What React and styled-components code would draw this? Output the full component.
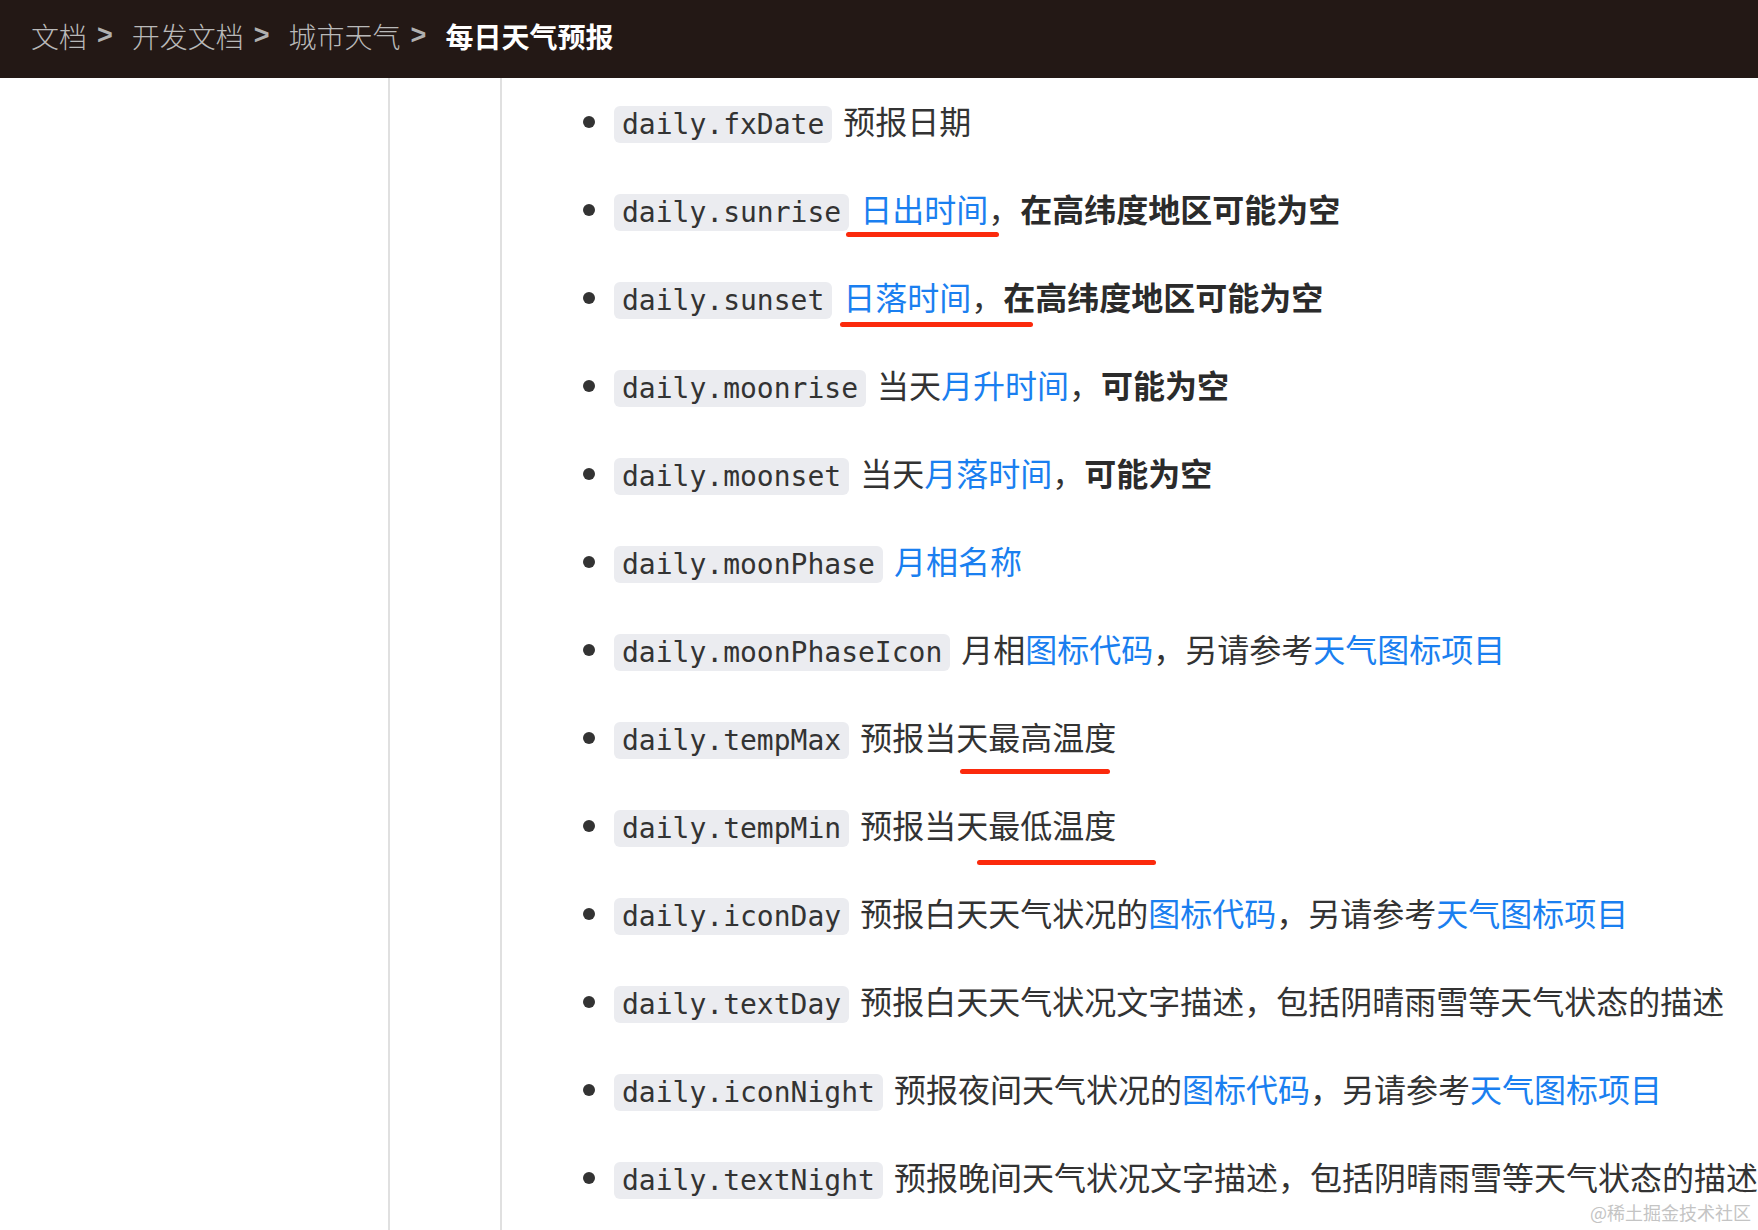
import React from "react";
import styled, { createGlobalStyle } from "styled-components";

const GlobalStyle = createGlobalStyle`
  html, body {
    margin: 0;
    padding: 0;
    background: #ffffff;
    overflow: hidden;
  }
  * {
    box-sizing: border-box;
  }
`;

const rows = [
  { code: "daily.fxDate", parts: [["t", "预报日期"]] },
  {
    code: "daily.sunrise",
    parts: [["a", "日出时间"], ["t", "，"], ["b", "在高纬度地区可能为空"]],
    mark: { left: 232, top: 66, width: 153 },
  },
  {
    code: "daily.sunset",
    parts: [["a", "日落时间"], ["t", "，"], ["b", "在高纬度地区可能为空"]],
    mark: { left: 226, top: 68, width: 193 },
  },
  { code: "daily.moonrise", parts: [["t", "当天"], ["a", "月升时间"], ["t", "，"], ["b", "可能为空"]] },
  { code: "daily.moonset", parts: [["t", "当天"], ["a", "月落时间"], ["t", "，"], ["b", "可能为空"]] },
  { code: "daily.moonPhase", parts: [["a", "月相名称"]] },
  {
    code: "daily.moonPhaseIcon",
    parts: [["t", "月相"], ["a", "图标代码"], ["t", "，另请参考"], ["a", "天气图标项目"]],
  },
  {
    code: "daily.tempMax",
    parts: [["t", "预报当天最高温度"]],
    mark: { left: 346, top: 75, width: 150 },
  },
  {
    code: "daily.tempMin",
    parts: [["t", "预报当天最低温度"]],
    mark: { left: 363, top: 78, width: 179 },
  },
  {
    code: "daily.iconDay",
    parts: [["t", "预报白天天气状况的"], ["a", "图标代码"], ["t", "，另请参考"], ["a", "天气图标项目"]],
  },
  { code: "daily.textDay", parts: [["t", "预报白天天气状况文字描述，包括阴晴雨雪等天气状态的描述"]] },
  {
    code: "daily.iconNight",
    parts: [["t", "预报夜间天气状况的"], ["a", "图标代码"], ["t", "，另请参考"], ["a", "天气图标项目"]],
  },
  { code: "daily.textNight", parts: [["t", "预报晚间天气状况文字描述，包括阴晴雨雪等天气状态的描述"]] },
];

const crumbs = ["文档", "开发文档", "城市天气"];

const App = () => {
  return (
    <React.Fragment>
      <GlobalStyle />
      <Page>
        <Header>
          {crumbs.map((c) => (
            <React.Fragment key={c}>
              <Crumb>{c}</Crumb>
              <Sep>&gt;</Sep>
            </React.Fragment>
          ))}
          <Crumb $current>每日天气预报</Crumb>
        </Header>
        <Body>
          <Sidebar />
          <Gutter />
          <Content>
            <List>
              {rows.map((row) => (
                <Item key={row.code}>
                  <Code>{row.code}</Code>
                  {row.parts.map(([kind, text], i) => {
                    if (kind === "a") return <Link key={i}>{text}</Link>;
                    if (kind === "b") return <Strong key={i}>{text}</Strong>;
                    return <span key={i}>{text}</span>;
                  })}
                  {/* 红色手绘下划线 */}
                  {row.mark && (
                    <Mark $left={row.mark.left} $top={row.mark.top} $width={row.mark.width} />
                  )}
                </Item>
              ))}
            </List>
          </Content>
        </Body>
        <Watermark>@稀土掘金技术社区</Watermark>
      </Page>
    </React.Fragment>
  );
};
export default App;

const Page = styled.div`
  position: relative;
  width: 100vw;
  height: 100vh;
  display: flex;
  flex-direction: column;
  overflow: hidden;
  font-family: "Noto Sans CJK SC", "Noto Sans", sans-serif;
  color: #333333;
`;

const Header = styled.div`
  flex: none;
  height: 78px;
  background-color: #231815;
  display: flex;
  align-items: center;
  padding: 0 0 7px 31px;
  font-size: 28px;
  white-space: nowrap;
`;

const Crumb = styled.span`
  color: ${(p) => (p.$current ? "#ffffff" : "#b9b9b9")};
  font-weight: ${(p) => (p.$current ? 700 : 300)};
`;

const Sep = styled.span`
  margin: 0 19px 0 10px;
  color: #b0b0b0;
  font-weight: 700;
  font-family: "Liberation Sans", sans-serif;
  font-size: 27px;
`;

const Body = styled.div`
  flex: 1;
  display: flex;
  min-height: 0;
`;

const Sidebar = styled.div`
  flex: none;
  width: 390px;
  border-right: 2px solid #e0e0e0;
`;

const Gutter = styled.div`
  flex: none;
  width: 112px;
  border-right: 2px solid #e0e0e0;
`;

const Content = styled.div`
  flex: 1;
  min-width: 0;
`;

const List = styled.ul`
  margin: 0;
  padding: 0 0 0 112px;
  list-style: disc;
`;

const Item = styled.li`
  position: relative;
  font-size: 32px;
  line-height: 84px;
  margin-bottom: 4px;
  white-space: nowrap;
  color: #333333;
`;

const Code = styled.code`
  font-family: "DejaVu Sans Mono", "Liberation Mono", monospace;
  font-size: 28px;
  line-height: 1;
  padding: 2px 8px;
  margin-right: 11px;
  background-color: #ebecf0;
  border-radius: 6px;
  color: #333333;
`;

const Link = styled.span`
  color: #1a7ff0;
`;

const Strong = styled.span`
  font-weight: 700;
  color: #2b2b2b;
`;

const Mark = styled.span`
  position: absolute;
  left: ${(p) => p.$left}px;
  top: ${(p) => p.$top}px;
  width: ${(p) => p.$width}px;
  height: 5px;
  border-radius: 3px;
  background-color: #fb2a0c;
`;

const Watermark = styled.div`
  position: absolute;
  right: 7px;
  bottom: 5px;
  font-size: 18px;
  color: #c4c4c4;
  text-shadow: 0 0 1px #ffffff;
  white-space: nowrap;
`;
